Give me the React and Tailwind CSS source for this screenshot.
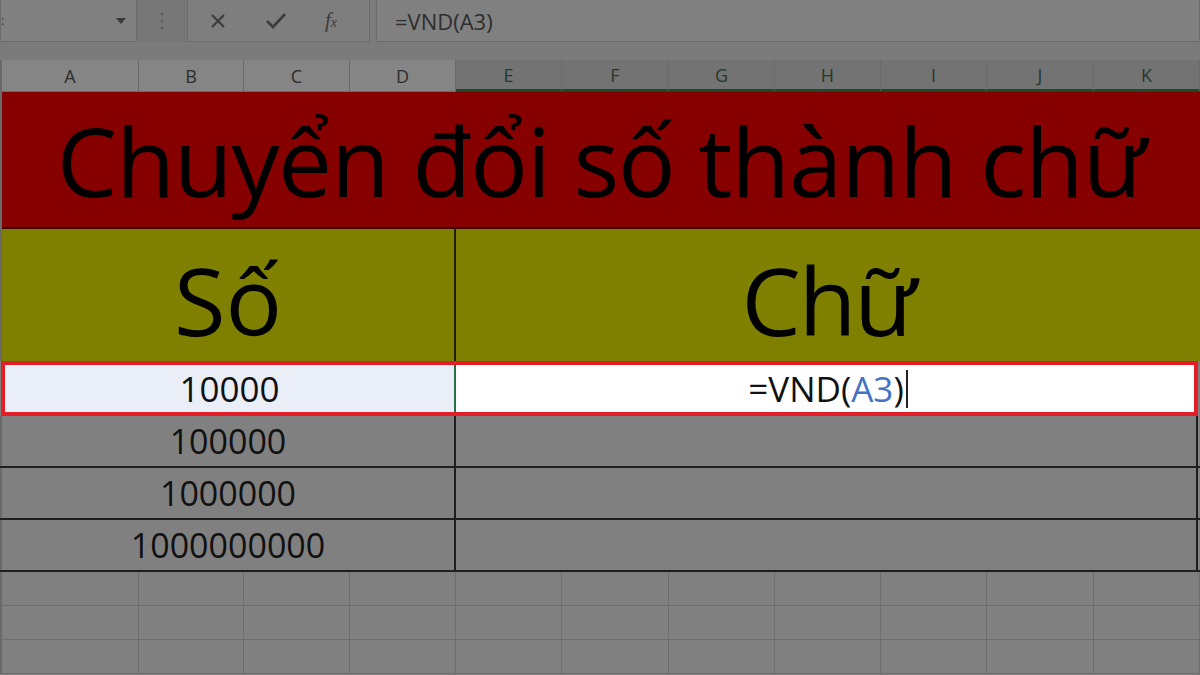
const COLS = [
  { key: "A", w: "w-[137px]" },
  { key: "B", w: "w-[105px]" },
  { key: "C", w: "w-[106px]" },
  { key: "D", w: "w-[106px]" },
  { key: "E", w: "w-[106px]" },
  { key: "F", w: "w-[107px]" },
  { key: "G", w: "w-[106px]" },
  { key: "H", w: "w-[106px]" },
  { key: "I", w: "w-[106px]" },
  { key: "J", w: "w-[107px]" },
  { key: "K", w: "w-[106px]" },
];

const SELECTED = ["E", "F", "G", "H", "I", "J", "K"];

const FormulaBar = () => (
  <div className="h-[60px] shrink-0 flex items-start bg-[#7b7b7b]">
    {/* name box */}
    <div className="w-[137px] h-[43px] -mt-px bg-[#808080] border border-[#6c6c6c] flex items-center justify-end pr-[9px] relative">
      <span className="absolute left-0 top-[15px] text-[#333] text-[12px] leading-none">:</span>
      <svg width="12" height="8" viewBox="0 0 12 8">
        <path d="M1 1 L11 1 L6 7 Z" fill="#3a3a3a" />
      </svg>
    </div>
    <div className="w-[50px] h-[42px] flex items-center justify-center bg-[#777777]">
      <svg width="4" height="18" viewBox="0 0 4 18">
        <circle cx="2" cy="2" r="1.3" fill="#5a5a5a" />
        <circle cx="2" cy="9" r="1.3" fill="#5a5a5a" />
        <circle cx="2" cy="16" r="1.3" fill="#5a5a5a" />
      </svg>
    </div>
    <div className="w-[183px] h-[43px] -mt-px bg-[#7e7e7e] border border-[#6c6c6c] flex items-center gap-[38px] pl-[21px]">
      <svg width="18" height="18" viewBox="0 0 18 18">
        <path d="M3 3 L15 15 M15 3 L3 15" stroke="#3c3c3c" strokeWidth="2.2" />
      </svg>
      <svg width="22" height="18" viewBox="0 0 22 18">
        <path d="M2 9 L8 15 L20 2" stroke="#3c3c3c" strokeWidth="2.6" fill="none" />
      </svg>
      <span className="font-['Liberation_Serif'] italic text-[#3c3c3c] text-[21px] leading-none">
        f<span className="text-[14px]">x</span>
      </span>
    </div>
    <div className="w-[6px]" />
    <div className="flex-1 h-[43px] -mt-px bg-[#808080] border border-[#6c6c6c] flex items-center pl-[18px]">
      <span className="text-[22px] text-[#2e2e2e] leading-none">=VND(A3)</span>
    </div>
  </div>
);

const ColumnHeaders = () => (
  <div className="h-[32px] shrink-0 flex bg-[#7b7b7b]">
    <div className="w-[2px] bg-[#6a6a6a]" />
    {COLS.map((c) => {
      const sel = SELECTED.includes(c.key);
      return (
        <div
          key={c.key}
          className={
            c.w +
            " h-full flex items-center justify-center border-r border-[#6a6a6a] text-[18px] leading-none " +
            (sel
              ? "bg-[#737373] text-[#24382c] border-b-[3px] border-b-[#1e4a2c]"
              : "bg-[#858585] text-[#2c2c2c] border-b border-b-[#6a6a6a]")
          }
        >
          {c.key}
        </div>
      );
    })}
  </div>
);

const EmptyRow = () => (
  <div className="h-[34px] flex shrink-0">
    <div className="w-[2px] bg-[#6a6a6a]" />
    {COLS.map((c) => (
      <div key={c.key} className={c.w + " h-full border-r border-b border-[#6d6d6d]"} />
    ))}
  </div>
);

const DataRow = ({ value }) => (
  <div className="h-[52px] flex border-b-2 border-[#1f1f1f] shrink-0">
    <div className="w-[2px] bg-[#6a6a6a]" />
    <div className="w-[454px] h-full border-r-2 border-[#1f1f1f] flex items-center justify-center text-[34px] text-[#111] leading-none">
      {value}
    </div>
    <div className="flex-1 h-full border-r-2 border-[#1f1f1f] mr-[2px]" />
  </div>
);

export default function App() {
  return (
    <div className="w-[1200px] h-[675px] overflow-hidden bg-[#808080] font-['Open_Sans',sans-serif] flex flex-col">
      <FormulaBar />
      <ColumnHeaders />

      {/* title */}
      <div className="h-[137px] flex shrink-0">
        <div className="w-[2px] bg-[#6a6a6a]" />
        <div className="flex-1 bg-[#870000] border-b-2 border-[#3a0000] flex items-center justify-center">
          <span className="text-[96px] leading-none tracking-[-1.2px] text-black">
            Chuyển đổi số thành chữ
          </span>
        </div>
      </div>

      {/* headers */}
      <div className="h-[132px] flex shrink-0">
        <div className="w-[2px] bg-[#6a6a6a]" />
        <div className="w-[454px] bg-[#808000] border-r-2 border-[#1f1f1f] flex items-center justify-center pt-[10px]">
          <span className="text-[94px] leading-none text-black">Số</span>
        </div>
        <div className="flex-1 bg-[#808000] flex items-center justify-center pt-[10px]">
          <span className="text-[94px] leading-none tracking-[-2px] text-black">Chữ</span>
        </div>
      </div>

      {/* active row */}
      <div className="h-[55px] flex shrink-0 border-4 border-[#e41e26] ml-[1px] mr-[2px]">
        <div className="w-[451px] h-full bg-[#e9eef7] border-r-2 border-[#217346] flex items-center justify-center text-[35px] text-[#111] leading-none">
          10000
        </div>
        <div className="flex-1 h-full bg-white flex items-center justify-center">
          <span className="text-[35px] text-[#111] leading-none pl-[6px]">
            =VND(<span className="text-[#4472c4]">A3</span>)
          </span>
          <span className="w-[2px] h-[38px] bg-[#222] ml-[2px]" />
        </div>
      </div>

      <DataRow value="100000" />
      <DataRow value="1000000" />
      <DataRow value="1000000000" />

      <EmptyRow />
      <EmptyRow />
      <EmptyRow />
    </div>
  );
}
